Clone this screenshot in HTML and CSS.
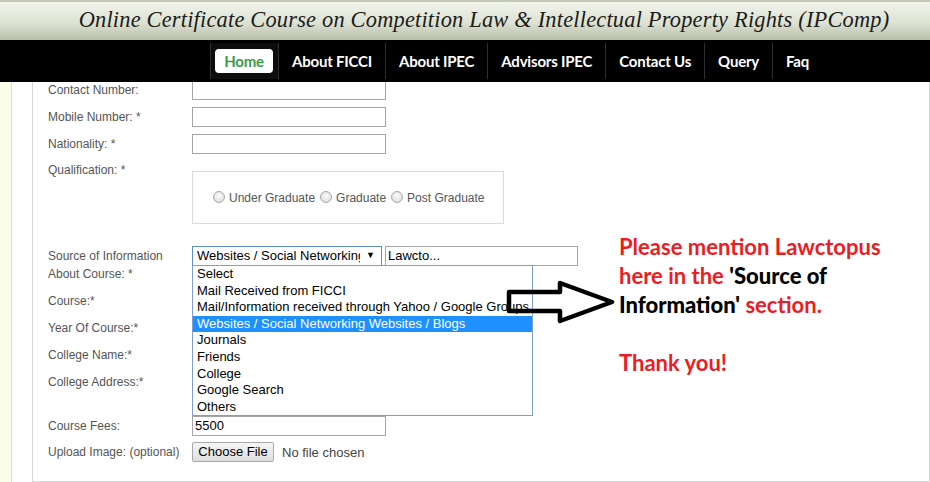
FILE: index.html
```html
<!DOCTYPE html>
<html lang="en">
<head>
  <meta charset="UTF-8" />
  <title>IPComp Registration</title>
  <link rel="stylesheet" href="styles.css">
</head>
<body>
  <header class="title">Online Certificate Course on Competition Law &amp; Intellectual Property Rights (IPComp)</header>

  <nav class="menu">
    <ul>
      <li class="active"><a href="#">Home</a></li>
      <li><a href="#">About FICCI</a></li>
      <li><a href="#">About IPEC</a></li>
      <li><a href="#">Advisors IPEC</a></li>
      <li><a href="#">Contact Us</a></li>
      <li><a href="#">Query</a></li>
      <li><a href="#">Faq</a></li>
    </ul>
  </nav>

  <div class="page">
    <div class="strip"></div>
    <div class="gutter"></div>
    <div class="panel">
      <div class="form">
        <div class="row first">
          <label>Contact Number:</label>
          <span class="input"></span>
        </div>
        <div class="row">
          <label>Mobile Number: *</label>
          <span class="input"></span>
        </div>
        <div class="row">
          <label>Nationality: *</label>
          <span class="input"></span>
        </div>
        <div class="row qual">
          <label>Qualification: *</label>
          <div class="choices">
            <span class="radio"></span><span>Under Graduate</span>
            <span class="radio"></span><span>Graduate</span>
            <span class="radio"></span><span>Post Graduate</span>
          </div>
        </div>
        <div class="row source">
          <label>Source of Information</label>
          <div class="field">
            <span class="select"><span class="current">Websites / Social Networking Websites / Blogs</span><i>&#9660;</i></span>
            <span class="input other">Lawcto...</span>
            <ul class="dropdown">
              <li>Select</li>
              <li>Mail Received from FICCI</li>
              <li>Mail/Information received through Yahoo / Google Groups</li>
              <li class="picked">Websites / Social Networking Websites / Blogs</li>
              <li>Journals</li>
              <li>Friends</li>
              <li>College</li>
              <li>Google Search</li>
              <li>Others</li>
            </ul>
          </div>
        </div>
        <div class="row bare"><label>About Course: *</label></div>
        <div class="row bare"><label>Course:*</label></div>
        <div class="row bare"><label>Year Of Course:*</label></div>
        <div class="row bare"><label>College Name:*</label></div>
        <div class="row bare addr"><label>College Address:*</label></div>
        <div class="row fees">
          <label>Course Fees:</label>
          <span class="input">5500</span>
        </div>
        <div class="row">
          <label>Upload Image: (optional)</label>
          <span class="file-btn">Choose File</span>
          <span class="file-name">No file chosen</span>
        </div>
      </div>

      <svg class="arrow" width="112" height="48" viewBox="0 0 112 48">
        <polygon points="4,14 55,14 55,5 107,24 55,43 55,33 4,33" fill="none" stroke="#000" stroke-width="4.5" stroke-linejoin="round"/>
      </svg>

      <div class="note">
        <p>Please mention Lawctopus here in the <b>'Source of Information'</b> section.</p>
        <p>Thank you!</p>
      </div>
    </div>
  </div>
</body>
</html>
```

FILE: styles.css
```css
* { box-sizing: border-box; }
body {
  margin: 0;
  font-family: 'Liberation Sans', Arial, sans-serif;
  background: #fff;
  height: 482px;
  overflow: hidden;
}

.title {
  height: 40px;
  border-top: 2px solid #c3c8b6;
  background: linear-gradient(#f2f4ec, #dde2d3 55%, #b7bfa8);
  text-align: center;
  padding-left: 38px;
  font-family: 'Liberation Serif', serif;
  font-style: italic;
  font-size: 22.4px;
  line-height: 36px;
  color: #1c1c1c;
  letter-spacing: 0.2px;
  white-space: nowrap;
}

.menu {
  height: 42px;
  background: #000;
  position: relative;
  z-index: 3;
}

.menu ul {
  list-style: none;
  margin: 0;
  padding: 3px 0 0 210px;
  display: flex;
}

.menu li {
  height: 36px;
  border-left: 1px solid #2e2e2e;
  display: flex;
  align-items: center;
  padding: 0 13px;
}

.menu a {
  color: #fff;
  text-decoration: none;
  font-family: Lato, sans-serif;
  font-weight: bold;
  font-size: 15px;
  letter-spacing: -0.2px;
}

.menu li.active {
  background: #0d0d0d;
  padding: 0 5px 0 4px;
}

.menu li.active a {
  display: block;
  background: #fff;
  color: #3a9b4f;
  border-radius: 4px;
  width: 58px;
  height: 24px;
  line-height: 24px;
  text-align: center;
}

.page {
  display: flex;
  height: 400px;
}

.strip {
  width: 12px;
  background: #fcfde8;
  border-right: 1px solid #dcdcdc;
}

.gutter { width: 20px; }

.panel {
  flex: 1;
  position: relative;
  border-left: 1px solid #d8d8d8;
  border-right: 1px solid #d8d8d8;
  border-bottom: 1px solid #d8d8d8;
  padding: 0 0 0 15px;
}

.row {
  display: flex;
  align-items: center;
  height: 20px;
  margin-bottom: 7px;
  font-size: 12px;
  color: #555;
}

.row.first { margin-top: -2px; }

.row label {
  width: 144px;
  flex: none;
}

.input {
  width: 194px;
  height: 20px;
  border: 1px solid #a6a6a6;
  font-size: 13px;
  color: #000;
  padding: 1px 2px;
  line-height: 16px;
}

.qual {
  height: 63px;
  align-items: flex-start;
  margin-bottom: 22px;
}

.qual label { line-height: 18px; }

.choices {
  margin-top: 10px;
  width: 312px;
  height: 53px;
  border: 1px solid #dadada;
  display: flex;
  align-items: center;
  padding-left: 20px;
  gap: 4px;
}

.choices span:not(.radio) { margin-right: 1px; }

.radio {
  width: 12px;
  height: 12px;
  border-radius: 50%;
  border: 1px solid #a9a9a9;
  background: radial-gradient(circle at 50% 40%, #fbfbfb, #d6d6d6);
  margin-top: -1px;
}

.source { margin-bottom: -1px; }

.field {
  position: relative;
  display: flex;
  gap: 3px;
}

.select {
  width: 190px;
  height: 20px;
  border: 1px solid #5e8ed1;
  font-size: 13px;
  color: #000;
  line-height: 17px;
  padding: 0 6px 0 4px;
  display: flex;
  gap: 6px;
}

.select .current {
  flex: 1;
  white-space: nowrap;
  overflow: hidden;
}

.select i {
  font-style: normal;
  font-size: 9px;
}

.input.other { width: 193px; }

.dropdown {
  position: absolute;
  left: 0;
  top: 19px;
  width: 341px;
  height: 151px;
  margin: 0;
  padding: 0;
  list-style: none;
  border: 1px solid #7f9ed6;
  background: #fff;
  z-index: 1;
}

.dropdown li {
  height: 16.6px;
  line-height: 16.6px;
  font-size: 13px;
  color: #000;
  padding-left: 4px;
  white-space: nowrap;
  overflow: hidden;
}

.dropdown li.picked {
  background: #1e90ff;
  color: #fff;
}

.row.bare {
  height: 27px;
  margin-bottom: 0;
  align-items: flex-start;
}

.row.bare label { line-height: 18px; }

.row.addr { height: 43px; }

.fees { margin-bottom: 6px; }

.file-btn {
  width: 82px;
  height: 20px;
  border: 1px solid #a9a9a9;
  border-radius: 2px;
  background: linear-gradient(#f6f6f6, #dedede);
  color: #000;
  font-size: 13px;
  text-align: center;
  line-height: 18px;
}

.file-name {
  font-size: 13px;
  color: #444;
  margin-left: 8px;
}

.arrow {
  position: absolute;
  left: 472px;
  top: 196px;
  z-index: 2;
}

.note {
  position: absolute;
  left: 586px;
  top: 150px;
  width: 280px;
  font-family: Lato, sans-serif;
  font-weight: bold;
  font-size: 22px;
  line-height: 29px;
  color: #ed1c24;
}

.note p { margin: 0 0 29px; }

.note b { color: #000; }
```
